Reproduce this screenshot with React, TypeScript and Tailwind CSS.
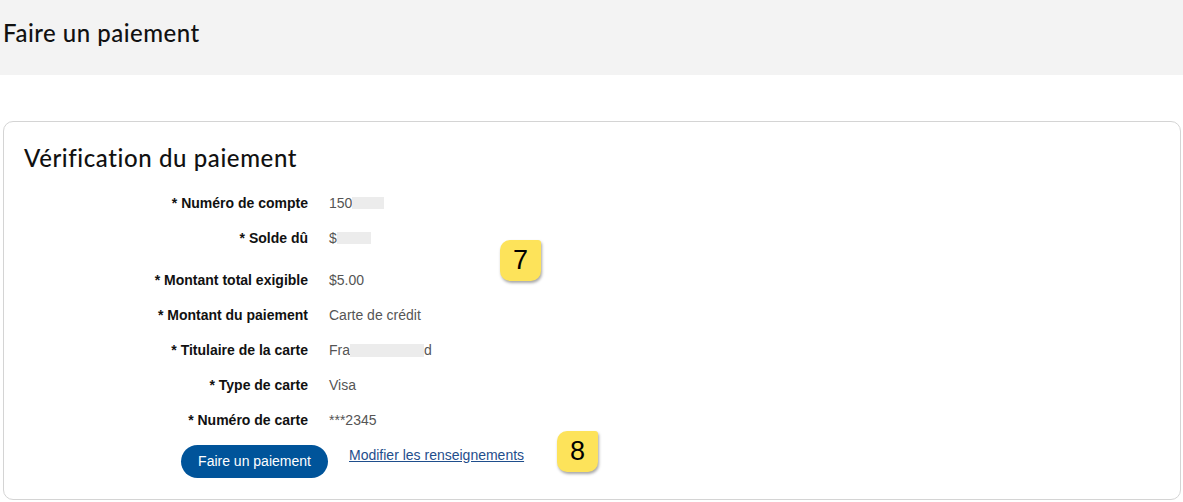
import React from "react";

const rows: { label: string; value: React.ReactNode; extra?: string }[] = [
  {
    label: "* Numéro de compte",
    value: (
      <span className="flex items-center">
        150<span className="inline-block w-[32px] h-[12px] bg-[#ececec]" />
      </span>
    ),
  },
  {
    label: "* Solde dû",
    value: (
      <span className="flex items-center">
        $<span className="inline-block w-[34px] h-[12px] bg-[#ececec]" />
      </span>
    ),
    extra: "mb-[7px]",
  },
  { label: "* Montant total exigible", value: "$5.00" },
  { label: "* Montant du paiement", value: "Carte de crédit" },
  {
    label: "* Titulaire de la carte",
    value: (
      <span className="flex items-center">
        Fra<span className="inline-block w-[74px] h-[13px] bg-[#ececec]" />d
      </span>
    ),
  },
  { label: "* Type de carte", value: "Visa" },
  { label: "* Numéro de carte", value: "***2345" },
];

function Badge({ n }: { n: string }) {
  return (
    <div className="w-[41px] h-[41px] bg-[#fde35a] rounded-tl-[10px] rounded-bl-[10px] rounded-br-[10px] rounded-tr-[3px] shadow-[1px_2px_3px_rgba(0,0,0,0.35)] flex items-center justify-center text-[27px] text-black font-['Liberation_Sans',sans-serif] leading-none">
      {n}
    </div>
  );
}

export default function App() {
  return (
    <div className="w-[1183px] h-[502px] bg-white font-['Liberation_Sans',Arial,sans-serif] overflow-hidden">
      <div className="h-[75px] bg-[#f3f3f3] flex items-center pl-[3px] pb-[10px]">
        <h1 className="text-[24px] font-['Lato',sans-serif] font-medium text-[#111] tracking-[0.5px]">
          Faire un paiement
        </h1>
      </div>
      <div className="mt-[46px] ml-[3px] mr-[2px] h-[379px] border border-[#d4d4d4] rounded-[10px] pl-[20px] pt-[21px] relative">
        <h2 className="text-[24px] leading-[30px] font-['Lato',sans-serif] font-medium text-[#111] tracking-[0.6px]">
          Vérification du paiement
        </h2>
        <div className="mt-[20px] flex flex-col gap-[15px] text-[14px] leading-[20px]">
          {rows.map((r) => (
            <div key={r.label} className={`flex ${r.extra ?? ""}`}>
              <div className="w-[284px] text-right font-bold text-[#111]">{r.label}</div>
              <div className="ml-[21px] text-[#555]">{r.value}</div>
            </div>
          ))}
        </div>
        <div className="flex items-center mt-[15px]">
          <div className="w-[157px]" />
          <button className="w-[147px] h-[33px] rounded-full bg-[#00549a] text-white text-[14px]">
            Faire un paiement
          </button>
          <a href="#" className="ml-[21px] -mt-[12px] text-[14px] text-[#1f4e8c] underline">
            Modifier les renseignements
          </a>
          <div className="ml-[33px] -mt-[21px]">
            <Badge n="8" />
          </div>
        </div>
        <div className="absolute left-[496px] top-[118px]">
          <Badge n="7" />
        </div>
      </div>
    </div>
  );
}
